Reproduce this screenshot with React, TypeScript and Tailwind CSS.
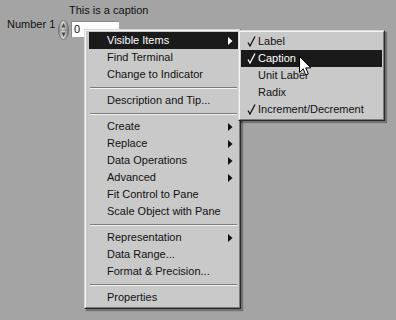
import React from "react";

const font = { fontFamily: '"Liberation Sans", Arial, sans-serif' };

function Arrow({ white }: { white?: boolean }) {
  return (
    <svg width="5" height="8" viewBox="0 0 5 8" className="shrink-0">
      <path d="M0 0 L4.5 4 L0 8 Z" fill={white ? "#ffffff" : "#111111"} />
    </svg>
  );
}

function Check({ white }: { white?: boolean }) {
  return (
    <svg width="9" height="11" viewBox="0 0 9 11" className="shrink-0">
      <path
        d="M1 6.5 L3 10 L8 0.5"
        fill="none"
        stroke={white ? "#ffffff" : "#111111"}
        strokeWidth="1.3"
      />
    </svg>
  );
}

type Item = { t: string; sub?: boolean; hi?: boolean } | "sep";

const mainItems: Item[] = [
  { t: "Visible Items", sub: true, hi: true },
  { t: "Find Terminal" },
  { t: "Change to Indicator" },
  "sep",
  { t: "Description and Tip..." },
  "sep",
  { t: "Create", sub: true },
  { t: "Replace", sub: true },
  { t: "Data Operations", sub: true },
  { t: "Advanced", sub: true },
  { t: "Fit Control to Pane" },
  { t: "Scale Object with Pane" },
  "sep",
  { t: "Representation", sub: true },
  { t: "Data Range..." },
  { t: "Format & Precision..." },
  "sep",
  { t: "Properties" },
];

const subItems = [
  { t: "Label", c: true },
  { t: "Caption", c: true, hi: true },
  { t: "Unit Label", c: false },
  { t: "Radix", c: false },
  { t: "Increment/Decrement", c: true },
];

function Frame({ children, className }: { children: React.ReactNode; className: string }) {
  return (
    <div
      className={
        "absolute border border-t-[#d8d8d8] border-l-[#d8d8d8] border-r-[#262626] border-b-[#262626] shadow-[2px_2px_1px_rgba(0,0,0,0.3)] " +
        className
      }
    >
      <div className="border border-t-[#f4f4f4] border-l-[#f4f4f4] border-r-[#7c7c7c] border-b-[#7c7c7c] bg-[#c9c9c9]">
        {children}
      </div>
    </div>
  );
}

function Cursor() {
  return (
    <svg width="13" height="21" viewBox="0 0 13 21" className="absolute left-[299px] top-[56px]">
      <path
        d="M0.5 0.5 L0.5 16.5 L4.2 12.8 L6.8 19 L9.3 18 L6.8 11.9 L11.8 11.9 Z"
        fill="#ffffff"
        stroke="#000000"
        strokeWidth="1"
        strokeLinejoin="miter"
      />
    </svg>
  );
}

function Spinner() {
  return (
    <svg width="11" height="20" viewBox="0 0 11 20" className="shrink-0">
      <defs>
        <linearGradient id="sg" x1="0" x2="1" y1="0" y2="0">
          <stop offset="0" stopColor="#8a8a8a" />
          <stop offset="0.45" stopColor="#d8d8d8" />
          <stop offset="1" stopColor="#7a7a7a" />
        </linearGradient>
      </defs>
      <ellipse cx="5.5" cy="10" rx="5" ry="9.5" fill="url(#sg)" stroke="#6a6a6a" strokeWidth="0.8" />
      <line x1="1" y1="10" x2="10" y2="10" stroke="#777" strokeWidth="0.7" />
      <path d="M5.5 3 L7.5 7.5 L3.5 7.5 Z" fill="#4a4a4a" />
      <path d="M5.5 17 L7.5 12.5 L3.5 12.5 Z" fill="#4a4a4a" />
    </svg>
  );
}

export default function App() {
  return (
    <div
      className="relative w-[396px] h-[320px] overflow-hidden bg-[#a4a4a4] text-[11px] text-[#111111]"
      style={font}
    >
      <div className="pt-[4px] pl-[7px]">
        <div className="ml-[62px] h-[13px] leading-[13px]">This is a caption</div>
        <div className="flex items-start mt-[3px]">
          <div className="w-[51px] mt-[-2px] leading-[13px]">Number 1</div>
          <Spinner />
          <div className="ml-[2px] mt-[1px] w-[48px] h-[16px] bg-white border-t border-l border-[#8a8a8a] pl-[2px] leading-[15px]">
            0
          </div>
        </div>
      </div>

      <Frame className="left-[84px] top-[29px] w-[157px]">
        <div className="pt-[1px] pb-[1px] pl-[3px] pr-[1px]">
          {mainItems.map((it, i) =>
            it === "sep" ? (
              <div key={i} className="h-[9px] flex flex-col justify-center px-[1px]">
                <div className="h-px bg-[#7a7a7a]" />
                <div className="h-px bg-[#f4f4f4]" />
              </div>
            ) : (
              <div
                key={i}
                className={
                  "flex h-[17px] items-center justify-between pl-[18px] pr-[5px] " +
                  (it.hi ? "bg-[#1a1a1a] text-white" : "")
                }
              >
                <span>{it.t}</span>
                {it.sub && <Arrow white={it.hi} />}
              </div>
            )
          )}
        </div>
      </Frame>

      <Frame className="left-[238px] top-[30px] w-[147px]">
        <div className="py-[1px] px-[1px]">
          {subItems.map((it, i) => (
            <div
              key={i}
              className={
                "flex h-[17px] items-center pl-[6px] " +
                (it.hi ? "bg-[#1a1a1a] text-white" : "")
              }
            >
              <span className="w-[11px] flex">{it.c && <Check white={it.hi} />}</span>
              <span>{it.t}</span>
            </div>
          ))}
        </div>
      </Frame>

      <Cursor />
    </div>
  );
}
